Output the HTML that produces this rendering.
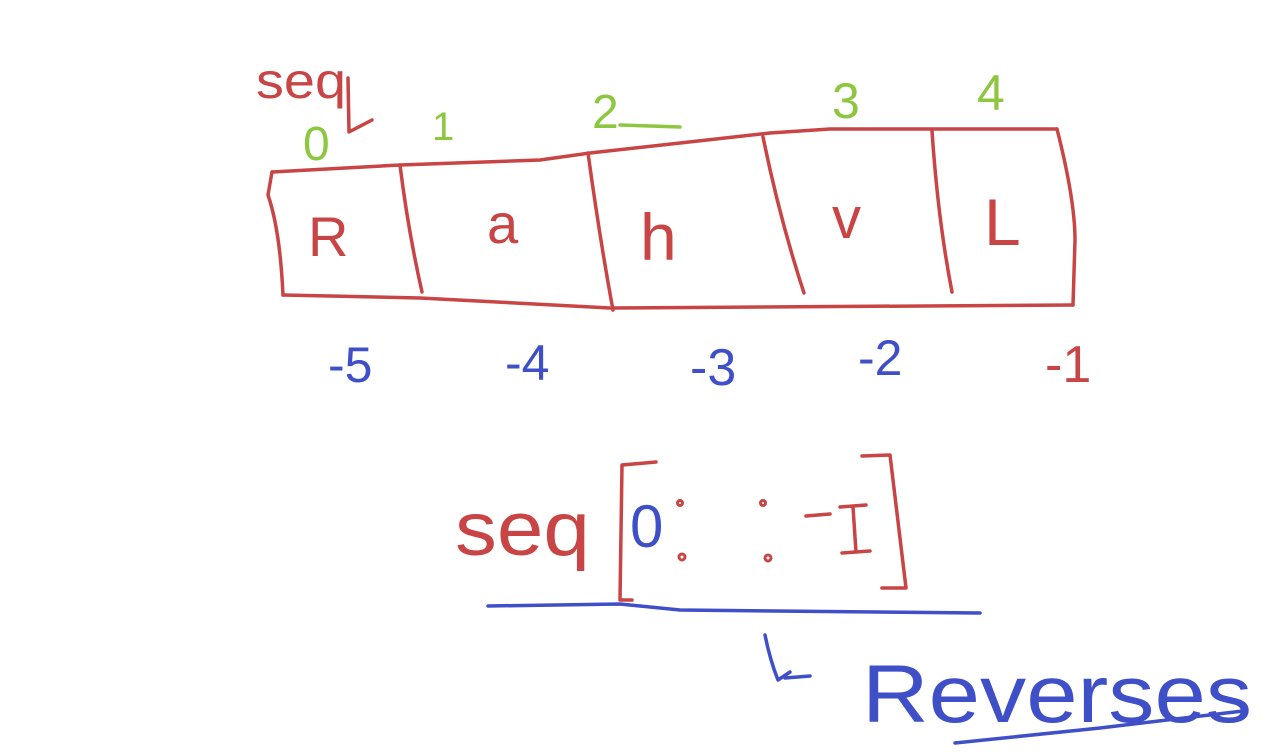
<!DOCTYPE html>
<html><head><meta charset="utf-8"><style>
html,body{margin:0;padding:0;background:#fff;width:1265px;height:754px;overflow:hidden}
svg{display:block}
text{font-family:"Liberation Sans",sans-serif}
</style></head><body>
<svg width="1265" height="754" viewBox="0 0 1265 754" fill="none" stroke-linecap="round" stroke-linejoin="round">
<g stroke="#c94444" stroke-width="3.5">
<path d="M272 172 L400 165 L540 160 L590 153 L680 143 L770 133 L830 129 L1057 129"/>
<path d="M1057 129 Q1075 200 1075 240 L1073 305"/>
<path d="M283 295 L420 298 L610 308 L1073 305"/>
<path d="M272 172 L268 195 Q280 230 283 295"/>
<path d="M400 165 Q408 230 422 292"/>
<path d="M588 153 Q600 240 613 310"/>
<path d="M763 137 Q780 220 804 293"/>
<path d="M932 131 Q938 220 952 292"/>
<path d="M348 78 L349 132 L372 120"/>
<path d="M656 462 L622 465 L620 600 L632 600"/>
<path d="M862 456 L890 455 L906 588 L882 588"/>
<path d="M806 516 L830 514"/>
<path d="M840 507 L866 505 M853 507 L856 552 M842 553 L870 551"/>
</g>
<g fill="#c94444">
<text x="256" y="98" font-size="50" textLength="90" lengthAdjust="spacingAndGlyphs">seq</text>
<text x="308" y="256" font-size="56">R</text>
<text x="487" y="243" font-size="56">a</text>
<text x="640" y="260" font-size="66">h</text>
<text x="832" y="238" font-size="58">v</text>
<text x="984" y="245" font-size="66">L</text>
<text x="455" y="555" font-size="76" textLength="135" lengthAdjust="spacingAndGlyphs">seq</text>
<text x="1045" y="382" font-size="52">-1</text>
</g>
<g fill="#8dc63f">
<text x="303" y="160" font-size="48">0</text>
<text x="432" y="140" font-size="40">1</text>
<text x="592" y="128" font-size="48">2</text>
<text x="832" y="118" font-size="50">3</text>
<text x="977" y="110" font-size="50">4</text>
</g>
<path d="M620 125 L680 127" stroke="#8dc63f" stroke-width="3.5"/>
<g fill="#3f4fc8">
<text x="328" y="382" font-size="50">-5</text>
<text x="505" y="380" font-size="50">-4</text>
<text x="690" y="385" font-size="52">-3</text>
<text x="858" y="375" font-size="50">-2</text>
<text x="630" y="547" font-size="60">0</text>
<text x="862" y="722" font-size="82" textLength="390" lengthAdjust="spacingAndGlyphs">Reverses</text>
</g>
<g stroke="#3f4fc8" stroke-width="3.5">
<path d="M488 606 L620 604 L680 610 L980 613"/>
<path d="M765 635 Q770 660 778 680 L790 672"/>
<path d="M785 678 L810 676"/>
<path d="M955 743 L1100 728 L1243 711"/>
</g>
<g stroke="#c94444" stroke-width="3">
<circle cx="680" cy="503" r="2.5"/><circle cx="682" cy="557" r="3"/>
<circle cx="763" cy="503" r="2.5"/><circle cx="768" cy="558" r="3"/>
</g>
</svg>
</body></html>
